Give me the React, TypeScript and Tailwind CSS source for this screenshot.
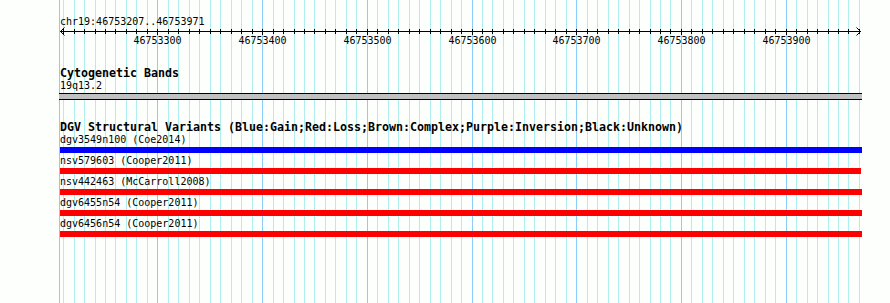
import React from 'react';

const START = 46753207;
const END = 46753971;
const X0 = 60;
const SPAN = 800;

// bp -> pixel column on the track canvas
const toX = (p: number) => Math.round(X0 + ((p - START) * SPAN) / (END - START));

const gridPositions: number[] = [];
for (let p = 46753210; p <= 46753970; p += 10) gridPositions.push(p);

const variants = [
  { label: 'dgv3549n100 (Coe2014)', color: 'bg-[#0000ff]', width: 'w-[802px]' },
  { label: 'nsv579603 (Cooper2011)', color: 'bg-[#ff0000]', width: 'w-[801px]' },
  { label: 'nsv442463 (McCarroll2008)', color: 'bg-[#ff0000]', width: 'w-[802px]' },
  { label: 'dgv6455n54 (Cooper2011)', color: 'bg-[#ff0000]', width: 'w-[802px]' },
  { label: 'dgv6456n54 (Cooper2011)', color: 'bg-[#ff0000]', width: 'w-[802px]' },
];

const Grid = () => (
  <svg className="absolute inset-0" width={890} height={303} shapeRendering="crispEdges">
    <rect x={59} y={0} width={1} height={303} fill="#87cefa" />
    {gridPositions.map((p) => (
      <rect
        key={p}
        x={toX(p)}
        y={0}
        width={1}
        height={303}
        fill={p % 100 === 0 ? '#87cefa' : '#afeeee'}
      />
    ))}
  </svg>
);

const Ruler = () => (
  <svg width={890} height={20} className="block overflow-visible">
    <g shapeRendering="crispEdges">
      <rect x={60} y={4} width={801} height={1} fill="#000" />
      {gridPositions.map((p) => (
        <rect key={p} x={toX(p)} y={2} width={1} height={p % 100 === 0 ? 6 : 5} fill="#000" />
      ))}
    </g>
    <polyline points="64.5,0.5 60.5,4.5 64.5,8.5" fill="none" stroke="#000" strokeWidth={1} />
    <polyline points="856.5,0.5 860.5,4.5 856.5,8.5" fill="none" stroke="#000" strokeWidth={1} />
    {gridPositions
      .filter((p) => p % 100 === 0)
      .map((p) => (
        <text
          key={p}
          x={toX(p) + 0.5}
          y={16.5}
          textAnchor="middle"
          fontFamily="'DejaVu Sans Mono', monospace"
          fontSize={10}
          fill="#000"
        >
          {p}
        </text>
      ))}
  </svg>
);

export default function App() {
  return (
    <div className="relative w-[890px] h-[303px] overflow-hidden bg-[#fdfffd] text-black font-['DejaVu_Sans_Mono',monospace]">
      <Grid />
      <div className="relative">
        <div className="mt-[18px] h-[9px] pl-[60px] text-[10px] leading-[8px] whitespace-pre">
          chr19:46753207..46753971
        </div>
        <Ruler />

        <div className="mt-[21px] h-[12px] pl-[60px] text-[11.63px] leading-[10px] font-bold whitespace-pre">
          Cytogenetic Bands
        </div>
        <div className="mt-[1px] h-[11px] pl-[60px] text-[10px] leading-[10px] whitespace-pre">
          19q13.2
        </div>
        <div className="mt-[1px] ml-[59px] w-[803px] h-[7px] border-y border-black bg-[#c0c0c0]" />

        <div className="mt-[22px] h-[12px] pl-[60px] text-[11.63px] leading-[10px] font-bold whitespace-pre">
          DGV Structural Variants (Blue:Gain;Red:Loss;Brown:Complex;Purple:Inversion;Black:Unknown)
        </div>
        <div className="flex flex-col">
          {variants.map((v) => (
            <div key={v.label} className="mt-[1px] mb-[2px] flex flex-col">
              <div className="h-[11px] pl-[60px] text-[10px] leading-[10px] whitespace-pre">
                {v.label}
              </div>
              <div className={`mt-[1px] ml-[60px] h-[6px] ${v.width} ${v.color}`} />
            </div>
          ))}
        </div>
      </div>
    </div>
  );
}
